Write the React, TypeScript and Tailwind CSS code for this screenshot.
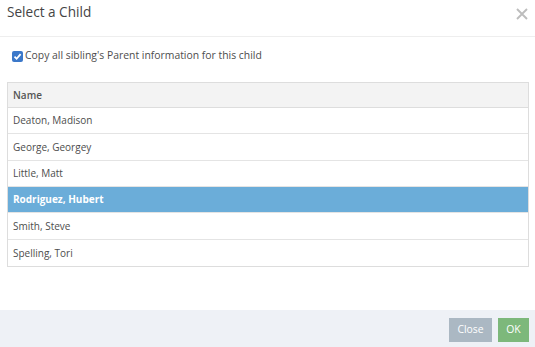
import React from "react";

const children = [
  { name: "Deaton, Madison", h: "h-[26px]" },
  { name: "George, Georgey", h: "h-[27px]" },
  { name: "Little, Matt", h: "h-[26px]" },
  { name: "Rodriguez, Hubert", h: "h-[26px]", selected: true },
  { name: "Smith, Steve", h: "h-[27px]" },
  { name: "Spelling, Tori", h: "h-[26px]" },
];

export default function App() {
  return (
    <div
      className="w-[535px] h-[347px] bg-white flex flex-col text-[#4d4d4d] overflow-hidden"
      style={{ fontFamily: '"Open Sans", "Liberation Sans", sans-serif' }}
    >
      {/* header */}
      <div className="h-[37px] shrink-0 flex items-start justify-between pl-[7px] pr-[7px] border-b border-[#eeeeee]">
        <h3 className="text-[13.6px] leading-[20px] mt-[2px] text-[#444]">Select a Child</h3>
        <button className="text-[#bdbdbd] mt-[8px]">
          <svg width="12" height="12" viewBox="0 0 12 12">
            <path d="M1 1 L11 11 M11 1 L1 11" stroke="currentColor" strokeWidth="1.9" />
          </svg>
        </button>
      </div>

      {/* body */}
      <div className="flex-1 pl-[7px] pr-[6px] pt-[13px]">
        <label className="h-[12px] flex items-center gap-[2px] pl-[5px] text-[10.4px] text-[#4d4d4d]">
          <span className="w-[11px] h-[11px] rounded-[2px] bg-[#3b78c9] flex items-center justify-center">
            <svg width="9" height="9" viewBox="0 0 9 9">
              <path d="M1.5 4.7 L3.6 6.8 L7.6 2.2" stroke="white" strokeWidth="1.8" fill="none" />
            </svg>
          </span>
          Copy all sibling's Parent information for this child
        </label>

        <div className="mt-[20px] border border-[#dddddd]">
          <div className="h-[25px] bg-[#f3f3f3] border-b border-[#dddddd] flex items-center px-[5px] text-[10px] font-semibold text-[#555]">
            Name
          </div>
          {children.map((c, i) => (
            <div
              key={c.name}
              className={`${c.h} flex items-center px-[5px] text-[10px] ${
                i < children.length - 1 ? "border-b border-[#e4e4e4]" : ""
              } ${c.selected ? "bg-[#6badd9] text-white font-bold" : "bg-white text-[#4d4d4d]"}`}
            >
              {c.name}
            </div>
          ))}
        </div>
      </div>

      {/* footer */}
      <div className="h-[37px] shrink-0 bg-[#eef1f6] flex items-center justify-end gap-[6px] pr-[6px] pt-[2px]">
        <button className="h-[24px] w-[43px] bg-[#abb8c3] text-white text-[10.4px]">Close</button>
        <button className="h-[24px] w-[31px] bg-[#7db87b] text-white text-[10.4px]">OK</button>
      </div>
    </div>
  );
}
